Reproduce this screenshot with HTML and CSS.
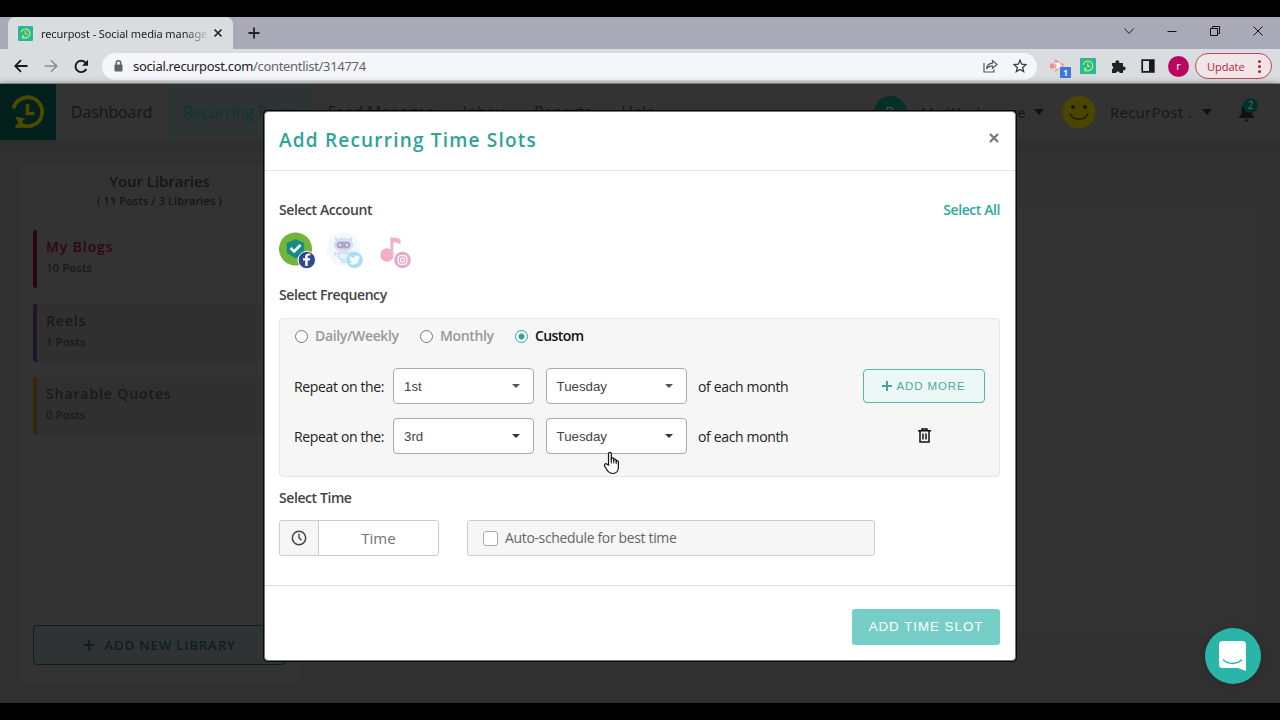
FILE: index.html
```
<!DOCTYPE html>
<html lang="en">
<head>
    <meta charset="UTF-8">
    <meta name="viewport" content="width=device-width, initial-scale=1.0">
    <title>recurpost - Social media management</title>
    <link rel="stylesheet" href="styles.css">
</head>
<body>
    <!-- shared logo shape -->
    <svg class="defs" width="0" height="0">
        <symbol id="recur" viewBox="0 0 36 36">
            <path d="M3.500 14.500A14.500 14.500 0 1 1 13 31.500" fill="none" stroke="currentColor" stroke-width="3.800"/>
            <path d="M5 22.500l10 2-3 3 4 6-11 .5 1-3 2.500-2z" fill="currentColor"/>
            <path d="M17.500 10v9.500h7" fill="none" stroke="currentColor" stroke-width="3.500"/>
        </symbol>
    </svg>

    <div class="tabstrip">
        <div class="tab">
            <svg class="favicon" width="15" height="15"><use href="#recur" x="2" y="2" width="11" height="11"/></svg>
            <span class="tab-title">recurpost - Social media manage</span>
            <svg width="10" height="10" viewBox="0 0 10 10"><path d="M1.500 1.500l7 7M8.500 1.500l-7 7" stroke="#222" stroke-width="1.700"/></svg>
        </div>
        <svg class="new-tab" width="12" height="12" viewBox="0 0 12 12"><path d="M6 .5v11M.5 6h11" stroke="#222" stroke-width="1.800"/></svg>
        <div class="window-buttons">
            <svg width="12" height="12" viewBox="0 0 12 12"><path d="M1.500 3.500L6 8.500l4.500-5" fill="none" stroke="#222"/></svg>
            <svg width="12" height="12" viewBox="0 0 12 12"><path d="M1.500 6.500h9" stroke="#111"/></svg>
            <svg width="12" height="12" viewBox="0 0 12 12"><path d="M1.500 3.500h7v7h-7zM3.500 3V1.500h7v7H9" fill="none" stroke="#111"/></svg>
            <svg width="12" height="12" viewBox="0 0 12 12"><path d="M1.500 1.500l9 9M10.500 1.500l-9 9" stroke="#111"/></svg>
        </div>
    </div>

    <div class="toolbar">
        <svg width="14" height="14" viewBox="0 0 14 14"><path d="M13.500 7H1.500M7 1.200L1.200 7 7 12.800" fill="none" stroke="#16181b" stroke-width="1.800"/></svg>
        <svg width="14" height="14" viewBox="0 0 14 14"><path d="M.5 7h12M7 1.200L12.800 7 7 12.800" fill="none" stroke="#8b8e91" stroke-width="1.600"/></svg>
        <svg class="reload" width="15" height="15" viewBox="0 0 15 15"><path d="M12.300 10A5.700 5.700 0 1 1 11.800 4" fill="none" stroke="#16181b" stroke-width="1.900"/><path d="M14 .8v6H8z" fill="#16181b"/></svg>
        <div class="address">
            <svg width="9" height="12" viewBox="0 0 9 12"><path d="M2.200 5V3a2.300 2.300 0 0 1 4.600 0v2" fill="none" stroke="#5f6368" stroke-width="1.400"/><rect x=".5" y="4.500" width="8" height="7" rx="1" fill="#5f6368"/></svg>
            <span class="url">social.recurpost.com<i>/contentlist/314774</i></span>
            <svg class="share" width="15" height="14" viewBox="0 0 15 14"><path d="M1 4v9h10v-2.500" fill="none" stroke="#55585c" stroke-width="1.200"/><path d="M3.500 10C4 6 6 4.300 9.500 4.200V1.500L14 5.500 9.500 9.300V6.800C7 6.800 5 7.500 3.500 10z" fill="none" stroke="#55585c" stroke-width="1.200"/></svg>
            <svg width="14" height="14" viewBox="0 0 14 14"><path d="M7 1.200l1.700 4 4.300.4-3.300 2.800 1 4.200L7 10.400l-3.700 2.200 1-4.200L1 5.600l4.300-.4z" fill="none" stroke="#3c4043" stroke-width="1.300"/></svg>
        </div>
        <div class="extension">
            <svg width="16" height="14" viewBox="0 0 16 14"><path d="M0 4.500h4v5H0z" fill="#ee8d92"/><path d="M5.500 1.500L14 6.500l-8.500 5z" fill="#fff" stroke="#e9979c" stroke-width="1.800" stroke-dasharray="4 1.500"/></svg>
            <span class="extension-count">1</span>
        </div>
        <svg class="favicon" width="16" height="16"><use href="#recur" x="2" y="2" width="12" height="12"/></svg>
        <svg class="puzzle" width="15" height="15" viewBox="0 0 15 15"><path d="M1 4h3.500a2 2 0 1 1 3.700 0H12v3.500a2 2 0 1 1 0 3.800V14H8.800a2 2 0 0 0-3.800 0H1v-3.700a1.900 1.900 0 0 0 0-3.600z" fill="#202124"/></svg>
        <svg class="sidepanel" width="14" height="14" viewBox="0 0 14 14"><path d="M1.200 1.200h11.600v11.600H1.200z" fill="none" stroke="#16181b" stroke-width="1.700"/><path d="M8 1h5v12H8z" fill="#16181b"/></svg>
        <span class="profile">r</span>
        <span class="update">Update <b></b></span>
    </div>

    <div class="page">
        <div class="navbar">
            <div class="brand"><svg width="36" height="36"><use href="#recur"/></svg></div>
            <div class="nav-item">Dashboard</div>
            <div class="nav-item active">Recurring Posts</div>
            <div class="nav-item">Feed Manager</div>
            <div class="nav-item">Inbox</div>
            <div class="nav-item">Reports</div>
            <div class="nav-item">Help</div>
            <div class="account">
                <span class="avatar">R</span>
                <span class="workspace">My Workspace</span>
                <span class="caret"></span>
                <svg class="smiley" width="34" height="34" viewBox="0 0 34 34"><circle cx="17" cy="17" r="16.500" fill="#4b4500"/><circle cx="11" cy="12" r="2" fill="#191700"/><circle cx="23" cy="12" r="2" fill="#191700"/><path d="M8 18.500c3 7.500 15 7.500 18 0" fill="none" stroke="#191700" stroke-width="1.300"/></svg>
                <span class="username">RecurPost .</span>
                <span class="caret"></span>
                <div class="bell">
                    <svg width="17" height="19" viewBox="0 0 17 19"><path d="M8.500 1C5 1 3.500 4 3.500 8c0 4-1.500 4.500-3 7h16c-1.500-2.500-3-3-3-7 0-4-1.500-7-5-7zM6.500 16.500h4a2 2 0 0 1-4 0z" fill="#101314"/></svg>
                    <span class="bell-count">2</span>
                </div>
            </div>
        </div>

        <div class="content">
            <div class="libraries">
                <h3>Your Libraries</h3>
                <p class="summary">( 11 Posts / 3 Libraries )</p>
                <div class="library blogs"><h4>My Blogs</h4><p>10 Posts</p></div>
                <div class="library reels"><h4>Reels</h4><p>1 Posts</p></div>
                <div class="library quotes"><h4>Sharable Quotes</h4><p>0 Posts</p></div>
                <div class="add-library"><svg width="12" height="12" viewBox="0 0 12 12"><path d="M6 .5v11M.5 6h11" stroke="#0b211e" stroke-width="2.200"/></svg>ADD NEW LIBRARY</div>
            </div>
            <div class="posts"></div>
        </div>

        <div class="modal">
            <div class="modal-header">
                <h2>Add Recurring Time Slots</h2>
                <svg width="10" height="10" viewBox="0 0 10 10"><path d="M1 1l8 8M9 1L1 9" stroke="#777" stroke-width="2.200"/></svg>
            </div>
            <div class="modal-body">
                <div class="label-row"><span>Select Account</span><a>Select All</a></div>
                <div class="accounts">
                    <svg width="38" height="38" viewBox="0 0 38 38">
                        <circle cx="16.500" cy="17" r="16.500" fill="#74b33c"/>
                        <path d="M16.500 8l8 3.500v9l-8 5-8-5v-9z" fill="#168d83" stroke="#168d83" stroke-width="1.500" stroke-linejoin="round"/>
                        <path d="M11.500 16l3.700 3.500 6.300-6.500" fill="none" stroke="#fff" stroke-width="2.600"/>
                        <circle cx="27.800" cy="28" r="8.700" fill="#33488e" stroke="#fff"/>
                        <path d="M28.700 34v-5.500h2.200l.3-2.300h-2.500v-1.400c0-.8.3-1.300 1.400-1.300h1.200v-2c-3.300-.5-5.100.6-5.100 3v1.700H24v2.300h2.200V34z" fill="#fff"/>
                    </svg>
                    <svg width="38" height="38" viewBox="0 0 38 38">
                        <circle cx="16.500" cy="17" r="16.500" fill="#f0f9fd"/>
                        <path d="M10 9L8.500 5.500M23 9l1.500-3.500" stroke="#d3d0ea" stroke-width="1.800"/>
                        <ellipse cx="16.500" cy="13" rx="9" ry="6.500" fill="#e4e1f3" stroke="#d3d1eb"/>
                        <rect x="9.500" y="9.500" width="14" height="7" rx="3.500" fill="#aba7cf"/>
                        <circle cx="13" cy="13" r="1.200" fill="#c8edf5"/><circle cx="20" cy="13" r="1.200" fill="#c8edf5"/>
                        <path d="M11 21h11v3a5.500 4 0 0 1-11 0z" fill="#e4f3f8" stroke="#b9d2e8"/>
                        <path d="M9.500 20l-2.500 3M23 20l3 2M14 30h5" stroke="#d3d0ea" stroke-width="1.600"/>
                        <circle cx="27.500" cy="28" r="8.300" fill="#a9dff2"/>
                        <path d="M22.500 31.500c4 2.500 9.300.5 9.500-5.500l1.200-1.400-1.500.2-.7-1c-2-1-4 .5-3.500 2.300-2 0-3.500-1-4.600-2.400-.7 1.500 0 2.800 1 3.500l-1-.2c.2 1.500 1 2 2 2.400-.5.900-1.300 1.600-2.400 2.100z" fill="#fff"/>
                    </svg>
                    <svg width="38" height="38" viewBox="0 0 38 38">
                        <path d="M15.500 5c3 1 6 0 10 2.500v5c-3-2-5-2-7.200-2.500v14h-3z" fill="#f4afc6"/>
                        <circle cx="12" cy="23" r="6.700" fill="#f4afc6"/>
                        <circle cx="27.500" cy="28" r="8.300" fill="#e8a8c9"/>
                        <rect x="23.200" y="23.700" width="8.600" height="8.600" rx="2.500" fill="none" stroke="#fff" stroke-width="1.200"/>
                        <circle cx="27.500" cy="28" r="2" fill="none" stroke="#fff" stroke-width="1.100"/><circle cx="30" cy="25.500" r=".6" fill="#fff"/>
                    </svg>
                </div>
                <div class="label">Select Frequency</div>
                <div class="frequency">
                    <div class="radios">
                        <span class="radio"></span><span class="daily">Daily/Weekly</span>
                        <span class="radio"></span><span class="monthly">Monthly</span>
                        <span class="radio checked"></span><span class="custom">Custom</span>
                    </div>
                    <div class="repeat">
                        <span class="repeat-label">Repeat on the:</span>
                        <div class="select">1st</div>
                        <div class="select">Tuesday</div>
                        <span>of each month</span>
                        <div class="action"><div class="add-more"><svg width="10" height="10" viewBox="0 0 10 10"><path d="M5 0v10M0 5h10" stroke="#46a79b" stroke-width="2"/></svg>ADD MORE</div></div>
                    </div>
                    <div class="repeat">
                        <span class="repeat-label">Repeat on the:</span>
                        <div class="select open">3rd</div>
                        <div class="select open">Tuesday</div>
                        <span>of each month</span>
                        <div class="action"><svg width="13" height="15" viewBox="0 0 13 15"><path d="M0 2.800h13M4 2.500V1h5v1.500M2 3v11h9V3M5 5.500v6M8 5.500v6" fill="none" stroke="#111" stroke-width="1.500"/></svg></div>
                    </div>
                </div>
                <div class="label">Select Time</div>
                <div class="time-row">
                    <div class="time">
                        <div class="clock"><svg width="16" height="16" viewBox="0 0 16 16"><circle cx="8" cy="8" r="6.700" fill="none" stroke="#444" stroke-width="1.500"/><path d="M8 3.800V8l2.500 2.300" fill="none" stroke="#444" stroke-width="1.400"/></svg></div>
                        <div class="time-input">Time</div>
                    </div>
                    <div class="auto"><span class="checkbox"></span>Auto-schedule for best time</div>
                </div>
            </div>
            <div class="modal-footer"><div class="submit">ADD TIME SLOT</div></div>
        </div>

        <svg class="cursor" width="18" height="24" viewBox="0 0 18 24"><path d="M5.500 14V3c0-2.200 2.800-2.200 2.800 0v6.500V7.500c.5-1 2.400-.7 2.500.6v2-1.500c.8-1 2.300-.5 2.400.8v1.600-.9c.8-.8 2.200-.2 2.200 1V16c0 3.500-2 6.500-5.500 6.500-4 0-5.500-2.500-8.200-7.200C.7 13.500 2.500 12 4 13.200z" fill="#fff" stroke="#111" stroke-width="1.200"/><path d="M8.300 8v4.500M10.800 9v3.500M13.200 10v3" stroke="#111"/></svg>

        <div class="chat"><svg width="28" height="32" viewBox="0 0 28 32"><path d="M3.500 1h20A3.500 3.500 0 0 1 27 4.500V31l-8-3H3.500A3.500 3.500 0 0 1 0 24.500v-20A3.500 3.500 0 0 1 3.500 1z" fill="#fff"/><path d="M4.500 20c5 4.500 13 4.500 18 0" fill="none" stroke="#2ab5a9" stroke-width="1.600" stroke-linecap="round"/></svg></div>
    </div>
</body>
</html>
```
FILE: styles.css
```
* {
    box-sizing: border-box;
}
body {
    margin: 0;
    height: 720px;
    padding: 17px 0;
    background-color: #000;
    font-family: "Open Sans", sans-serif;
    font-size: 14px;
    color: #333;
    overflow: hidden;
}
h2, h3, h4, p {
    margin: 0;
}
svg {
    display: block;
    flex: none;
}
.defs {
    position: absolute;
}

/* browser */
.tabstrip {
    height: 32px;
    padding-left: 8px;
    display: flex;
    align-items: center;
    background-color: #a8abb7;
}
.tab {
    width: 225px;
    height: 32px;
    padding: 0 10px;
    display: flex;
    align-items: center;
    background-color: #dadddf;
    border-radius: 7px 7px 0 0;
}
.favicon {
    background-color: #25b7a2;
    color: #d6ee3c;
    border-radius: 1px;
}
.tab-title {
    width: 167px;
    margin: 0 5px 0 8px;
    white-space: nowrap;
    font-family: "Noto Sans", sans-serif;
    font-size: 11px;
    letter-spacing: -0.1px;
    color: #222;
    -webkit-mask-image: linear-gradient(to right, #000 86%, transparent 101%);
    mask-image: linear-gradient(to right, #000 86%, transparent 101%);
}
.new-tab {
    margin-left: 15px;
}
.window-buttons {
    display: flex;
    gap: 31px;
    margin: -5px 16px 0 auto;
}
.toolbar {
    height: 35px;
    padding: 0 8px 0 14px;
    display: flex;
    align-items: center;
    background-color: #dadddf;
    border-bottom: 1px solid #9a9c9e;
}
.toolbar > svg:nth-child(2) {
    margin-left: 16px;
}
.toolbar .reload {
    margin-left: 16px;
}
.address {
    width: 935px;
    height: 27px;
    margin-left: 13px;
    padding: 0 10px 0 12px;
    display: flex;
    align-items: center;
    background-color: #f5f6f9;
    border-radius: 14px;
}
.url {
    margin-left: 10px;
    font-family: "Noto Sans", sans-serif;
    font-size: 13px;
    letter-spacing: -0.320px;
    color: #222;
}
.url i {
    font-style: normal;
    color: #5f6368;
}
.share {
    margin: 0 15px 0 auto;
}
.extension {
    position: relative;
    margin: 0 14px 0 13px;
}
.extension-count {
    position: absolute;
    left: 10px;
    top: 8px;
    width: 11px;
    height: 11px;
    background-color: #3f76dc;
    color: #fff;
    font-size: 8px;
    font-weight: 700;
    line-height: 11px;
    text-align: center;
    border-radius: 1px;
}
.puzzle {
    margin-left: 15px;
}
.sidepanel {
    margin-left: 15px;
}
.profile {
    width: 21px;
    height: 21px;
    margin-left: 13px;
    background-color: #b9075f;
    border-radius: 50%;
    color: #fff;
    font-size: 11px;
    line-height: 20px;
    text-align: center;
}
.update {
    width: 77px;
    height: 26px;
    margin-left: auto;
    padding-left: 11px;
    display: flex;
    align-items: center;
    border: 1px solid #ba4a57;
    border-radius: 13px;
    background-color: #f2e5e7;
    color: #b3263a;
    font-size: 11px;
}
.update b {
    width: 3px;
    height: 3px;
    margin-left: auto;
    margin-right: 10px;
    border-radius: 50%;
    background-color: #b3263a;
    box-shadow: 0 -5px #b3263a, 0 5px #b3263a;
}

/* dimmed page */
.page {
    position: relative;
    height: 619px;
    background-color: #313131;
}
.navbar {
    height: 56px;
    display: flex;
    background-color: #333;
    color: #151515;
    font-size: 15.800px;
    line-height: 56px;
    white-space: nowrap;
    box-shadow: 0 2px 8px #2e2e2e;
}
.brand {
    width: 56px;
    padding: 10px;
    background-color: #03211c;
    color: #4f4900;
}
.nav-item {
    padding: 0 15px;
}
.nav-item.active {
    background-color: #2e3433;
    color: #0c352f;
}
.account {
    height: 56px;
    margin-left: auto;
    padding-right: 24px;
    display: flex;
    align-items: center;
    font-size: 14.800px;
    letter-spacing: 0.4px;
}
.avatar {
    width: 33px;
    height: 33px;
    margin-right: 14px;
    border-radius: 50%;
    background-color: #043028;
    color: #3e5b55;
    line-height: 30px;
    text-align: center;
}
.caret {
    margin-left: 8px;
    border: 5px solid transparent;
    border-top: 6px solid #111;
    border-bottom: 0;
}
.smiley {
    margin: 0 14px 0 18px;
}
.username {
    margin-right: 2px;
}
.bell {
    position: relative;
    margin: 0 1px 0 26px;
}
.bell-count {
    position: absolute;
    left: 5px;
    top: -5px;
    width: 15px;
    height: 15px;
    border-radius: 50%;
    background-color: #03302a;
    color: #50706a;
    font-size: 10px;
    line-height: 15px;
    text-align: center;
    letter-spacing: 0;
}
.content {
    display: flex;
    align-items: flex-start;
    gap: 16px;
    padding: 24px 24px 0 20px;
}
.libraries {
    width: 280px;
    height: 520px;
    padding: 6px 14px 0 13px;
    display: flex;
    flex-direction: column;
    background-color: #333;
    box-shadow: 0 0 3px #2f2f2f;
}
.libraries h3 {
    color: #151515;
    font-size: 15px;
    font-weight: 600;
    line-height: 22px;
    text-align: center;
    letter-spacing: -0.050px;
}
.summary {
    margin-bottom: 20px;
    color: #151515;
    font-size: 11px;
    font-weight: 600;
    line-height: 18px;
    text-align: center;
    letter-spacing: 0.1px;
}
.library {
    height: 58px;
    margin-bottom: 15.500px;
    padding: 6px 9px;
    border-left: 4px solid;
    border-radius: 3px;
    background-color: #303030;
}
.library h4 {
    font-size: 14px;
    font-weight: 600;
    line-height: 22px;
    letter-spacing: 0.9px;
    color: #191919;
}
.library p {
    color: #191919;
    font-size: 11.500px;
    font-weight: 600;
    line-height: 20px;
}
.blogs {
    border-color: #2c0310;
    background-color: #333;
}
.blogs h4 {
    color: #2f0712;
}
.reels {
    border-color: #201428;
}
.quotes {
    border-color: #352607;
}
.add-library {
    height: 40px;
    margin: auto 0 19px;
    display: flex;
    align-items: center;
    justify-content: center;
    gap: 9px;
    border: 1px solid #06231f;
    border-radius: 4px;
    background-color: #2f3333;
    color: #0b211e;
    font-size: 13.300px;
    font-weight: 600;
    letter-spacing: 0.8px;
}
.posts {
    flex: 1;
    height: 426px;
    margin-top: 44px;
    background-color: #333;
}

/* modal */
.modal {
    position: absolute;
    left: 264px;
    top: 27px;
    width: 752px;
    height: 550px;
    background-color: #fff;
    border: 1px solid #777;
    border-radius: 4px;
    box-shadow: 0 0 0 1px #080808;
    letter-spacing: -0.350px;
}
.modal-header {
    height: 59px;
    padding: 0 16px 3px 14px;
    display: flex;
    align-items: center;
    justify-content: space-between;
    border-bottom: 1px solid #e5e5e5;
}
.modal-header h2 {
    color: #2ea396;
    font-size: 19px;
    font-weight: 600;
    letter-spacing: 1.200px;
}
.modal-header svg {
    margin-top: -3px;
}
.modal-body {
    height: 415px;
    padding: 29px 15px 0 14px;
    border-bottom: 1px solid #ddd;
}
.label-row {
    display: flex;
    justify-content: space-between;
    line-height: 20px;
    font-weight: 600;
    letter-spacing: -0.420px;
    color: #444;
}
.label-row a {
    color: #2ea99c;
}
.accounts {
    display: flex;
    gap: 10px;
    height: 38px;
    margin: 12px 0 15px;
}
.label {
    line-height: 20px;
    font-weight: 600;
    letter-spacing: -0.420px;
    color: #444;
}
.frequency {
    height: 159px;
    margin: 13px 0 11px;
    padding: 7px 14px;
    border: 1px solid #e6e6e6;
    border-radius: 4px;
    background-color: #f6f6f6;
}
.radios {
    display: flex;
    align-items: center;
    line-height: 20px;
    margin-bottom: 22px;
    padding-left: 1px;
    font-weight: 600;
    color: #999;
}
.radio {
    width: 13px;
    height: 13px;
    margin-right: 7px;
    border: 1px solid #777;
    border-radius: 50%;
    background-color: #fff;
}
.radio.checked {
    border: 1px solid #31a497;
    background: radial-gradient(circle, #31a497 2.500px, #fff 3.500px);
}
.daily {
    width: 105px;
}
.monthly {
    width: 75px;
}
.custom {
    color: #111;
    letter-spacing: -0.600px;
}
.repeat {
    height: 36px;
    margin-bottom: 14px;
    display: flex;
    align-items: center;
    color: #222;
}
.repeat-label {
    width: 99px;
}
.select {
    width: 141px;
    height: 36px;
    margin-right: 11.500px;
    padding: 0 13px 0 10px;
    display: flex;
    align-items: center;
    justify-content: space-between;
    border: 1px solid #aaa;
    border-radius: 4px;
    background-color: #fff;
    color: #444;
    font-family: "Liberation Sans", sans-serif;
    font-size: 13.300px;
    letter-spacing: 0;
}
.select::after {
    content: "";
    border: 4px solid transparent;
    border-top-color: #555;
    border-bottom: 0;
}
.select.open::after {
    border-top-color: #333;
}
.action {
    width: 122px;
    margin-left: auto;
    display: flex;
    justify-content: center;
}
.action > svg {
    margin-top: -2px;
}
.add-more {
    width: 122px;
    height: 34px;
    display: flex;
    align-items: center;
    justify-content: center;
    gap: 4px;
    border: 1px solid #50b8ad;
    border-radius: 4px;
    background-color: #ebf8f6;
    color: #55a79d;
    font-family: "Liberation Sans", sans-serif;
    font-size: 11.500px;
    letter-spacing: 0.9px;
}
.time-row {
    display: flex;
    gap: 28px;
    margin-top: 12px;
}
.time {
    width: 160px;
    height: 36px;
    display: flex;
    border: 1px solid #ccc;
    border-radius: 3px;
    overflow: hidden;
}
.clock {
    width: 39px;
    padding: 9px 11px;
    background-color: #f6f6f6;
    border-right: 1px solid #ccc;
}
.time-input {
    flex: 1;
    text-align: center;
    font-size: 15px;
    line-height: 34px;
    letter-spacing: 0;
    color: #6c757d;
}
.auto {
    width: 408px;
    height: 36px;
    padding: 0 15px 2px;
    display: flex;
    align-items: center;
    border: 1px solid #ccc;
    border-radius: 3px;
    background-color: #f6f6f6;
    color: #666;
}
.checkbox {
    width: 15px;
    height: 15px;
    margin: 2px 7px 0 0;
    border: 1px solid #aaa;
    border-radius: 3px;
    background-color: #fff;
}
.modal-footer {
    padding: 23px 15px 0;
    display: flex;
    justify-content: flex-end;
}
.submit {
    width: 148px;
    height: 36px;
    border-radius: 3px;
    background-color: #76cec6;
    color: #fff;
    font-family: "Liberation Sans", sans-serif;
    font-size: 13.300px;
    line-height: 36px;
    text-align: center;
    letter-spacing: 1px;
}
.cursor {
    position: absolute;
    left: 603px;
    top: 367px;
}
.chat {
    position: absolute;
    left: 1205px;
    top: 544px;
    width: 56px;
    height: 56px;
    padding: 12px 14px;
    border-radius: 50%;
    background-color: #2ab5a9;
    box-shadow: 0 1px 8px #292929;
}
```
